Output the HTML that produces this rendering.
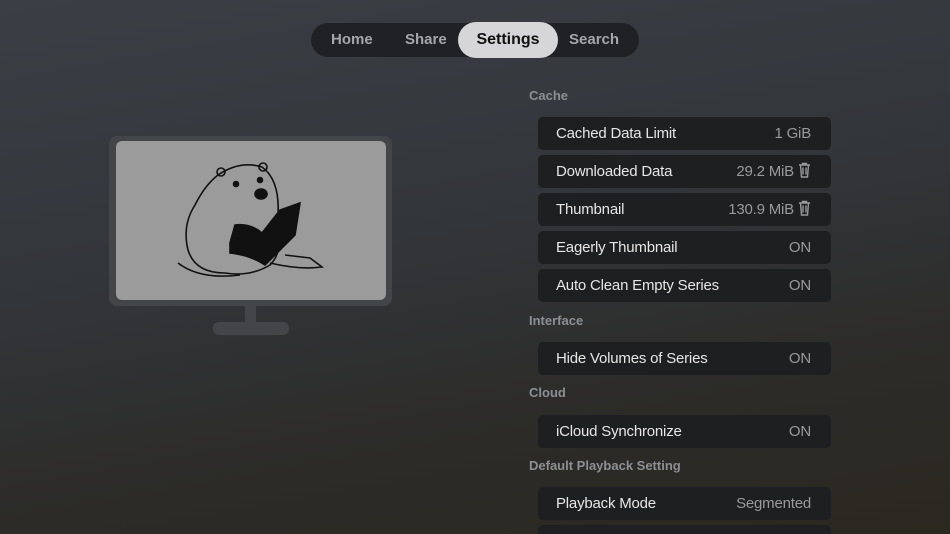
<!DOCTYPE html>
<html style="width:950px;height:534px;overflow:hidden"><head><style>
*{margin:0;padding:0;box-sizing:border-box}
body{width:950px;height:534px;overflow:hidden;position:relative;font-family:"Liberation Sans",sans-serif;
background:linear-gradient(170deg,#3b3f45 0%,#33363b 40%,#2c2b28 75%,#2b2820 100%);}
.nav{position:absolute;left:311px;top:23px;width:328px;height:34px;border-radius:17px;background:#1f2124}
.nav span{position:absolute;top:0;line-height:34px;font-size:15px;font-weight:bold;color:#a4a6a9}
.pill{position:absolute;left:458px;top:22px;width:100px;height:36px;border-radius:18px;background:#d6d6d8;color:#111;font-size:16px;font-weight:bold;text-align:center;line-height:36px}
.lab{position:absolute;left:529px;font-size:13px;font-weight:bold;color:#8c8f93}
.row{position:absolute;left:538px;width:293px;height:33px;border-radius:5px;background:#1e1f21;color:#e6e6e6;font-size:15px;letter-spacing:-0.2px;line-height:34px;padding-left:18px}
.row b{position:absolute;right:20px;top:0;font-weight:normal;color:#9a9a9c}
.tr{display:inline-block;vertical-align:-2px;margin-left:4px}
</style></head><body>
<div class="nav"><span style="left:20px">Home</span><span style="left:94px">Share</span><span style="left:258px">Search</span></div>
<div class="pill">Settings</div>

<div style="position:absolute;left:109px;top:136px;width:283px;height:170px;border-radius:8px;background:#444548"></div>
<div style="position:absolute;left:116px;top:141px;width:270px;height:159px;border-radius:6px;background:#9b9b9b"></div>
<div style="position:absolute;left:245px;top:305px;width:11px;height:18px;background:#444548"></div>
<div style="position:absolute;left:213px;top:322px;width:76px;height:13px;border-radius:6px;background:#444548"></div>
<svg style="position:absolute;left:170px;top:155px" width="160" height="130" viewBox="0 0 160 130" fill="none" stroke="#111" stroke-width="1.6">
<path d="M48 20 Q70 5 92 12 Q110 25 108 60 Q115 95 100 110 Q80 122 55 118 Q25 118 18 95 Q12 70 25 50 Q35 30 48 20Z"/>
<circle cx="51" cy="17" r="4"/><circle cx="93" cy="12" r="4"/>
<path d="M8 108 Q30 125 70 120 M100 108 Q130 115 152 112 L140 103 L115 100"/>
<path d="M60 88 L65 70 Q80 68 92 78 L110 55 L130 48 L125 80 L95 110 Q80 100 60 98Z" fill="#111"/>
<circle cx="66" cy="29" r="2.5" fill="#111"/><circle cx="90" cy="25" r="2.5" fill="#111"/>
<ellipse cx="91" cy="39" rx="6" ry="5" fill="#111"/>
</svg>

<div class="lab" style="top:88px">Cache</div>
<div class="row" style="top:117px">Cached Data Limit<b>1 GiB</b></div>
<div class="row" style="top:155px">Downloaded Data<b>29.2 MiB<svg class="tr" width="13" height="16" viewBox="0 0 13 16" fill="none" stroke="#9a9a9c" stroke-width="1.4"><path d="M1 3h11M4.5 3V1.5h4V3M2.5 3l1 12h6l1-12M5 5.5v7M8 5.5v7"/></svg></b></div>
<div class="row" style="top:193px">Thumbnail<b>130.9 MiB<svg class="tr" width="13" height="16" viewBox="0 0 13 16" fill="none" stroke="#9a9a9c" stroke-width="1.4"><path d="M1 3h11M4.5 3V1.5h4V3M2.5 3l1 12h6l1-12M5 5.5v7M8 5.5v7"/></svg></b></div>
<div class="row" style="top:231px">Eagerly Thumbnail<b>ON</b></div>
<div class="row" style="top:269px">Auto Clean Empty Series<b>ON</b></div>
<div class="lab" style="top:313px">Interface</div>
<div class="row" style="top:342px">Hide Volumes of Series<b>ON</b></div>
<div class="lab" style="top:385px">Cloud</div>
<div class="row" style="top:415px">iCloud Synchronize<b>ON</b></div>
<div class="lab" style="top:458px">Default Playback Setting</div>
<div class="row" style="top:487px">Playback Mode<b>Segmented</b></div>
<div class="row" style="top:525px;height:9px;border-radius:5px 5px 0 0"></div>
</body></html>
